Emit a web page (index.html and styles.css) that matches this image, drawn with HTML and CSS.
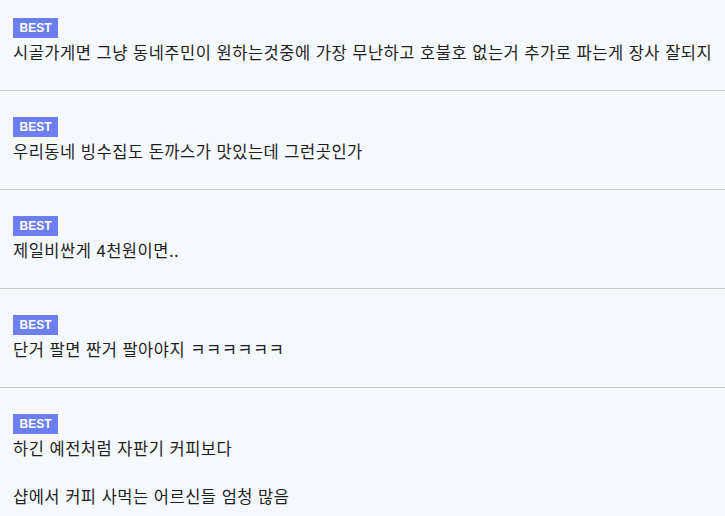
FILE: index.html
```html
<!DOCTYPE html>
<html lang="ko">
<head>
<meta charset="utf-8">
<link rel="stylesheet" href="styles.css">
</head>
<body>
<ul class="list">
  <li class="item">
    <span class="badge">BEST</span>
    <p class="text">시골가게면 그냥 동네주민이 원하는것중에 가장 무난하고 호불호 없는거 추가로 파는게 장사 잘되지</p>
  </li>
  <li class="item">
    <span class="badge">BEST</span>
    <p class="text">우리동네 빙수집도 돈까스가 맛있는데 그런곳인가</p>
  </li>
  <li class="item">
    <span class="badge">BEST</span>
    <p class="text">제일비싼게 4천원이면..</p>
  </li>
  <li class="item">
    <span class="badge">BEST</span>
    <p class="text">단거 팔면 짠거 팔아야지 ㅋㅋㅋㅋㅋㅋ</p>
  </li>
  <li class="item">
    <span class="badge">BEST</span>
    <p class="text">하긴 예전처럼 자판기 커피보다<br><br>샵에서 커피 사먹는 어르신들 엄청 많음</p>
  </li>
</ul>
</body>
</html>
```
FILE: styles.css
```css
html, body {
  margin: 0;
  padding: 0;
  background: #f5f8fd;
}
body {
  font-family: "Noto Sans CJK KR", "Noto Sans", sans-serif;
  color: #1e1e1e;
}
.list {
  list-style: none;
  margin: 0;
  padding: 0;
}
.item {
  padding: 26px 13px 26px;
  border-bottom: 1px solid #c8c9cb;
}
.item:first-child {
  padding-top: 18px;
}
.badge {
  display: flex;
  align-items: center;
  justify-content: center;
  width: 45px;
  height: 20px;
  background: #6c7ef0;
  color: #fff;
  font-family: "Liberation Sans", Arial, sans-serif;
  font-weight: bold;
  font-size: 12px;
}
.text {
  margin: 2px 0 0;
  font-size: 16.5px;
  letter-spacing: 0.5px;
  line-height: 24px;
  white-space: nowrap;
}
```
